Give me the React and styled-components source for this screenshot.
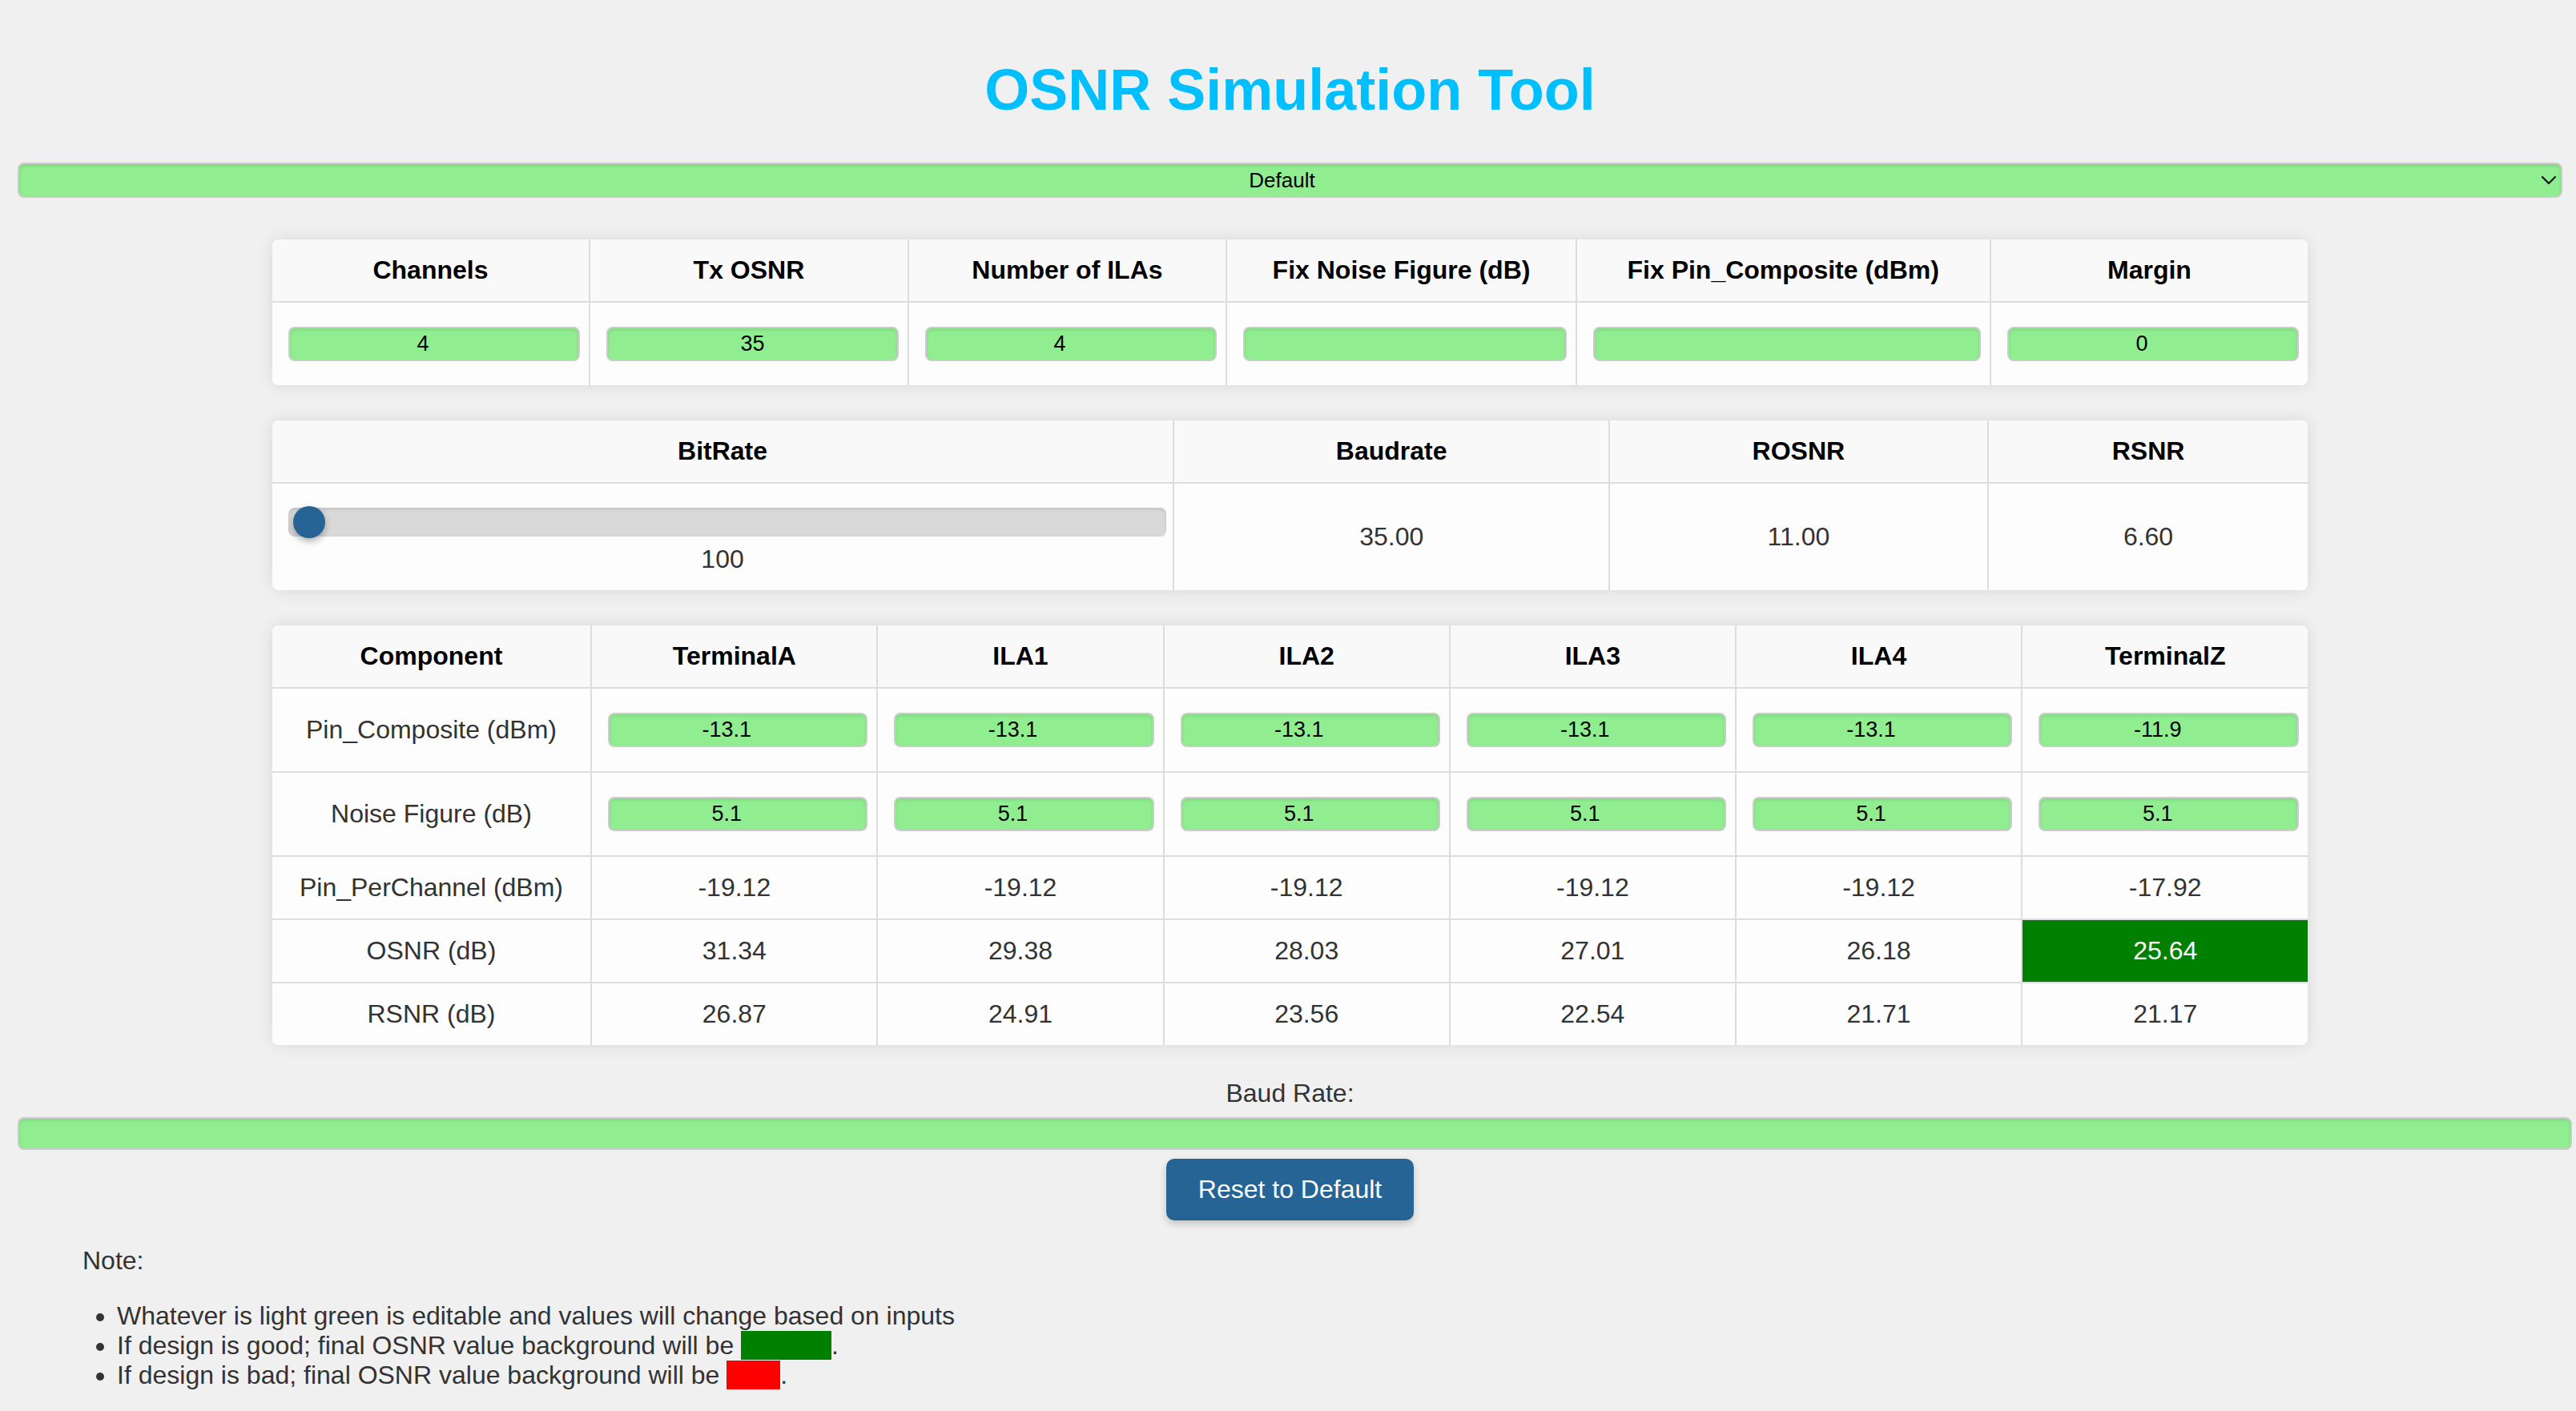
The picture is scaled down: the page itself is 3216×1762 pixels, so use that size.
import React from 'react';
import styled, { createGlobalStyle } from 'styled-components';

const GlobalStyle = createGlobalStyle`
  html, body {
    margin: 0;
    padding: 0;
    background: #f0f0f0;
  }
  body {
    font-family: "Liberation Sans", Arial, Helvetica, sans-serif;
    color: #333;
  }
`;

const Page = styled.div`
  padding: 72px 17px 30px 22px;
`;

const Title = styled.h1`
  margin: 0 0 51px;
  text-align: center;
  color: #00bfff;
  font-size: 72px;
  line-height: 80px;
  font-weight: bold;
`;

const SelectWrap = styled.div`
  position: relative;
`;

const Select = styled.select`
  display: block;
  box-sizing: border-box;
  width: 100%;
  height: 44px;
  margin: 0;
  padding: 0 36px 0 16px;
  appearance: none;
  -webkit-appearance: none;
  background: #90ee90;
  border: 2px solid #ccc;
  border-radius: 8px;
  box-shadow: inset 0 2px 4px rgba(0, 0, 0, 0.12);
  font-family: "Liberation Sans", Arial, sans-serif;
  font-size: 26px;
  color: #000;
  text-align: center;
  text-align-last: center;
  outline: none;
`;

const Chevron = styled.svg`
  position: absolute;
  right: 7px;
  top: 50%;
  width: 20px;
  height: 12px;
  transform: translateY(-50%);
  pointer-events: none;
`;

const Cards = styled.div`
  display: flex;
  flex-direction: column;
  align-items: center;
  gap: 44px;
  margin-top: 52px;
`;

const Card = styled.div`
  width: 80%;
  background: #fafafa;
  border-radius: 8px;
  overflow: hidden;
  box-shadow: 0 0 20px rgba(0, 0, 0, 0.1);
`;

const Table = styled.table`
  width: 100%;
  border-collapse: collapse;
  border-style: hidden;
  table-layout: fixed;
`;

const Col = styled.col`
  width: ${(p) => p.$w};
`;

const Th = styled.th`
  padding: 20px;
  border: 2px solid #ddd;
  background: #f9f9f9;
  color: #000;
  font-size: 32px;
  line-height: 37px;
  font-weight: bold;
  text-align: center;
`;

const Td = styled.td`
  padding: 20px;
  border: 2px solid #ddd;
  background: ${(p) => (p.$good ? '#008000' : '#fdfdfd')};
  color: ${(p) => (p.$good ? '#fff' : '#333')};
  font-size: 32px;
  line-height: 37px;
  text-align: center;
  vertical-align: middle;
`;

const CellInput = styled.input`
  display: block;
  box-sizing: border-box;
  width: calc(100% + 9px);
  height: 43px;
  margin: 10px 0;
  padding: ${(p) => (p.$plain ? '4px 2px' : '4px 30px 4px 2px')};
  background: #90ee90;
  border: 2px solid #ccc;
  border-radius: 8px;
  box-shadow: inset 0 2px 4px rgba(0, 0, 0, 0.1);
  font-family: "Liberation Sans", Arial, sans-serif;
  font-size: 27px;
  line-height: 31px;
  color: #000;
  text-align: center;
  outline: none;
`;

const Range = styled.input`
  -webkit-appearance: none;
  appearance: none;
  display: block;
  box-sizing: content-box;
  width: 100%;
  height: 36px;
  margin: 10px 0;
  padding: 0 6px;
  background: #d9d9d9;
  border-radius: 8px;
  box-shadow: inset 0 2px 4px rgba(0, 0, 0, 0.12);
  outline: none;

  &::-webkit-slider-thumb {
    -webkit-appearance: none;
    appearance: none;
    width: 40px;
    height: 40px;
    border-radius: 50%;
    background: #276496;
    box-shadow: 0 4px 8px rgba(0, 0, 0, 0.3);
    cursor: pointer;
  }
`;

const RangeValue = styled.div`
  font-size: 32px;
  line-height: 37px;
  color: #333;
  text-align: center;
`;

const BaudLabel = styled.label`
  display: block;
  margin-top: 42px;
  font-size: 32px;
  line-height: 37px;
  color: #333;
  text-align: center;
`;

const WideInput = styled.input`
  display: block;
  box-sizing: content-box;
  width: 100%;
  height: 37px;
  margin: 11px 0 0;
  padding: 0 4px;
  background: #90ee90;
  border: 2px solid #ccc;
  border-radius: 8px;
  box-shadow: inset 0 2px 4px rgba(0, 0, 0, 0.1);
  outline: none;
`;

const ResetButton = styled.button`
  display: block;
  margin: 11px auto 0;
  padding: 20px 40px;
  background: #276496;
  color: #fff;
  border: none;
  border-radius: 10px;
  box-shadow: 0 4px 10px rgba(0, 0, 0, 0.2);
  font-family: "Liberation Sans", Arial, sans-serif;
  font-size: 32px;
  line-height: 37px;
  cursor: pointer;
`;

const Notes = styled.div`
  margin: 32px 0 0 81px;
  font-size: 32px;
  line-height: 37px;
  color: #333;
`;

const NoteTitle = styled.p`
  margin: 0 0 32px;
`;

const List = styled.ul`
  margin: 0;
  padding-left: 43px;
`;

const Swatch = styled.span`
  display: inline-block;
  width: ${(p) => p.$w}px;
  height: 36px;
  vertical-align: -7px;
  background: ${(p) => p.$c};
`;

const top1 = [
  { h: 'Channels', v: '4', w: '15.6%' },
  { h: 'Tx OSNR', v: '35', w: '15.64%', plain: true },
  { h: 'Number of ILAs', v: '4', w: '15.64%' },
  { h: 'Fix Noise Figure (dB)', v: '', w: '17.18%' },
  { h: 'Fix Pin_Composite (dBm)', v: '', w: '20.33%' },
  { h: 'Margin', v: '0', w: '15.61%' },
];

const components = ['TerminalA', 'ILA1', 'ILA2', 'ILA3', 'ILA4', 'TerminalZ'];

const rows = [
  { label: 'Pin_Composite (dBm)', input: true, values: ['-13.1', '-13.1', '-13.1', '-13.1', '-13.1', '-11.9'] },
  { label: 'Noise Figure (dB)', input: true, values: ['5.1', '5.1', '5.1', '5.1', '5.1', '5.1'] },
  { label: 'Pin_PerChannel (dBm)', values: ['-19.12', '-19.12', '-19.12', '-19.12', '-19.12', '-17.92'] },
  { label: 'OSNR (dB)', values: ['31.34', '29.38', '28.03', '27.01', '26.18', '25.64'], goodLast: true },
  { label: 'RSNR (dB)', values: ['26.87', '24.91', '23.56', '22.54', '21.71', '21.17'] },
];

export default function App() {
  return (
    <>
      <GlobalStyle />
      <Page>
        <Title>OSNR Simulation Tool</Title>

        <SelectWrap>
          <Select defaultValue="Default">
            <option value="Default">Default</option>
          </Select>
          <Chevron viewBox="0 0 20 12">
            <path d="M2 2 L10 10 L18 2" fill="none" stroke="#111" strokeWidth="2.2" strokeLinecap="round" strokeLinejoin="round" />
          </Chevron>
        </SelectWrap>

        <Cards>
          <Card>
            <Table>
              <colgroup>
                {top1.map((c) => (
                  <Col key={c.h} $w={c.w} />
                ))}
              </colgroup>
              <thead>
                <tr>
                  {top1.map((c) => (
                    <Th key={c.h}>{c.h}</Th>
                  ))}
                </tr>
              </thead>
              <tbody>
                <tr>
                  {top1.map((c) => (
                    <Td key={c.h}>
                      <CellInput type="text" defaultValue={c.v} $plain={c.plain} />
                    </Td>
                  ))}
                </tr>
              </tbody>
            </Table>
          </Card>

          <Card>
            <Table>
              <colgroup>
                <Col $w="44.29%" />
                <Col $w="21.39%" />
                <Col $w="18.6%" />
                <Col $w="15.72%" />
              </colgroup>
              <thead>
                <tr>
                  <Th>BitRate</Th>
                  <Th>Baudrate</Th>
                  <Th>ROSNR</Th>
                  <Th>RSNR</Th>
                </tr>
              </thead>
              <tbody>
                <tr>
                  <Td>
                    <Range type="range" min="100" max="800" step="100" defaultValue="100" />
                    <RangeValue>100</RangeValue>
                  </Td>
                  <Td>35.00</Td>
                  <Td>11.00</Td>
                  <Td>6.60</Td>
                </tr>
              </tbody>
            </Table>
          </Card>

          <Card>
            <Table>
              <colgroup>
                <Col $w="15.68%" />
                {components.map((c) => (
                  <Col key={c} $w="14.053%" />
                ))}
              </colgroup>
              <thead>
                <tr>
                  <Th>Component</Th>
                  {components.map((c) => (
                    <Th key={c}>{c}</Th>
                  ))}
                </tr>
              </thead>
              <tbody>
                {rows.map((r) => (
                  <tr key={r.label}>
                    <Td>{r.label}</Td>
                    {r.values.map((v, i) => (
                      <Td key={i} $good={r.goodLast && i === r.values.length - 1}>
                        {r.input ? <CellInput type="text" defaultValue={v} /> : v}
                      </Td>
                    ))}
                  </tr>
                ))}
              </tbody>
            </Table>
          </Card>
        </Cards>

        <BaudLabel htmlFor="baud">Baud Rate:</BaudLabel>
        <WideInput id="baud" type="text" defaultValue="" />

        <ResetButton type="button">Reset to Default</ResetButton>

        <Notes>
          <NoteTitle>Note:</NoteTitle>
          <List>
            <li>Whatever is light green is editable and values will change based on inputs</li>
            <li>
              If design is good; final OSNR value background will be <Swatch $w={113} $c="#008000" />.
            </li>
            <li>
              If design is bad; final OSNR value background will be <Swatch $w={67} $c="#ff0000" />.
            </li>
          </List>
        </Notes>
      </Page>
    </>
  );
}
